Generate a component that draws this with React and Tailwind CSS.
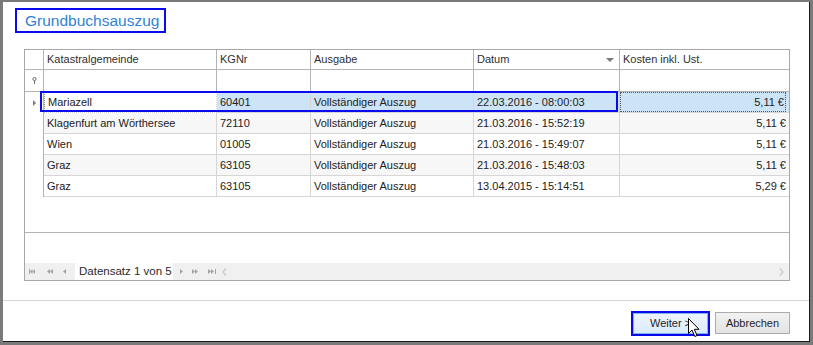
import React from "react";

const rows = [
  ["Mariazell", "60401", "Vollständiger Auszug", "22.03.2016 - 08:00:03", "5,11 €"],
  ["Klagenfurt am Wörthersee", "72110", "Vollständiger Auszug", "21.03.2016 - 15:52:19", "5,11 €"],
  ["Wien", "01005", "Vollständiger Auszug", "21.03.2016 - 15:49:07", "5,11 €"],
  ["Graz", "63105", "Vollständiger Auszug", "21.03.2016 - 15:48:03", "5,11 €"],
  ["Graz", "63105", "Vollständiger Auszug", "13.04.2015 - 15:14:51", "5,29 €"],
];

const Tri = ({ dir = "left", className = "" }) => (
  <svg width="3" height="5" viewBox="0 0 3 5" className={className}>
    {dir === "left" ? (
      <polygon points="3,0 0,2.5 3,5" fill="#a3a3a3" />
    ) : (
      <polygon points="0,0 3,2.5 0,5" fill="#a3a3a3" />
    )}
  </svg>
);

function Navigator() {
  return (
    <div className="flex items-center h-[17px] bg-[#f0f0f0]">
      <svg width="6" height="5" viewBox="0 0 6 5" className="ml-[4px]">
        <rect x="0" y="0" width="1" height="5" fill="#a3a3a3" />
        <polygon points="3.5,0 1,2.5 3.5,5" fill="#a3a3a3" />
        <polygon points="6,0 3.5,2.5 6,5" fill="#a3a3a3" />
      </svg>
      <svg width="6" height="5" viewBox="0 0 6 5" className="ml-[12px]">
        <polygon points="3,0 0,2.5 3,5" fill="#a3a3a3" />
        <polygon points="6,0 3,2.5 6,5" fill="#a3a3a3" />
      </svg>
      <Tri dir="left" className="ml-[10px]" />
      <div className="ml-[9px] w-[98px] h-[17px] bg-white flex items-center pl-[4px] text-[11.5px] text-[#2b2b2b] leading-none">
        Datensatz 1 von 5
      </div>
      <Tri dir="right" className="ml-[7px]" />
      <svg width="6" height="5" viewBox="0 0 6 5" className="ml-[9px]">
        <polygon points="0,0 3,2.5 0,5" fill="#a3a3a3" />
        <polygon points="3,0 6,2.5 3,5" fill="#a3a3a3" />
      </svg>
      <svg width="8" height="5" viewBox="0 0 8 5" className="ml-[10px]">
        <polygon points="0,0 3,2.5 0,5" fill="#a3a3a3" />
        <polygon points="3,0 6,2.5 3,5" fill="#a3a3a3" />
        <rect x="7" y="0" width="1" height="5" fill="#a3a3a3" />
      </svg>
      <svg width="5" height="8" viewBox="0 0 5 8" className="ml-[6px]">
        <polyline points="4,0.5 1,4 4,7.5" fill="none" stroke="#c9c9c9" strokeWidth="1.3" />
      </svg>
      <div className="flex-1" />
      <svg width="5" height="8" viewBox="0 0 5 8" className="mr-[5px]">
        <polyline points="1,0.5 4,4 1,7.5" fill="none" stroke="#c9c9c9" strokeWidth="1.3" />
      </svg>
    </div>
  );
}

function Grid() {
  const cols = "grid grid-cols-[19px_173px_94px_163px_146px_169px]";
  const hcell = "h-[20px] border-b border-r border-[#b4b4b4] flex items-center px-[3px] text-[#303030]";
  const fcell = "h-[22px] border-b border-r border-[#b4b4b4]";
  return (
    <div className="relative ml-[21px] mt-[16px] w-[766px] h-[232px] border border-[#a8a8a8] text-[11px] leading-none" style={{ fontFamily: '"Liberation Sans", Arial, sans-serif' }}>
      {/* header */}
      <div className={cols}>
        <div className={hcell} />
        <div className={hcell}>Katastralgemeinde</div>
        <div className={hcell}>KGNr</div>
        <div className={hcell}>Ausgabe</div>
        <div className={hcell + " justify-between"}>
          <span>Datum</span>
          <svg width="8" height="4" viewBox="0 0 8 4" className="mr-[2px]">
            <polygon points="0,0 8,0 4,4" fill="#7a7a7a" />
          </svg>
        </div>
        <div className={hcell.replace("border-r ", "")}>Kosten inkl. Ust.</div>
      </div>
      {/* filter row */}
      <div className={cols}>
        <div className={fcell + " flex items-center justify-center"}>
          <svg width="5" height="7" viewBox="0 0 5 7">
            <circle cx="2.5" cy="2" r="1.6" fill="none" stroke="#6a6a6a" strokeWidth="1" />
            <line x1="2.5" y1="3.6" x2="2.5" y2="7" stroke="#6a6a6a" strokeWidth="1" />
          </svg>
        </div>
        <div className={fcell} />
        <div className={fcell} />
        <div className={fcell} />
        <div className={fcell} />
        <div className={fcell.replace("border-r ", "")} />
      </div>
      {/* data rows */}
      {rows.map((r, i) => {
        const sel = i === 0;
        const alt = i % 2 === 1;
        const bg = sel ? "bg-[#cde4f7]" : alt ? "bg-[#f7f7f7]" : "bg-white";
        const cell = `h-[21px] border-b border-r border-[#d6d6d6] flex items-center px-[3px] text-[#222] whitespace-nowrap overflow-hidden ${bg}`;
        return (
          <div key={i} className={cols}>
            <div className="h-[21px] border-r border-[#b4b4b4] bg-white flex items-center justify-center">
              {sel && (
                <svg width="3" height="6" viewBox="0 0 3 6" className="ml-[1px]">
                  <polygon points="0,0 3,3 0,6" fill="#7a7a7a" />
                </svg>
              )}
            </div>
            <div className={sel ? "h-[21px] border-b border-r border-[#d6d6d6] flex items-center px-[3px] text-[#222] bg-white border-l border-l-[#888] border-dotted" : cell}>
              {r[0]}
            </div>
            <div className={cell}>{r[1]}</div>
            <div className={cell}>{r[2]}</div>
            <div className={cell}>{r[3]}</div>
            <div className={`h-[21px] border-b border-[#d6d6d6] flex items-center justify-end pr-[3px] text-[#222] ${bg}`}>
              {sel ? (
                <div className="w-full h-full border border-dotted border-[#555] flex items-center justify-end pr-[1px]">{r[4]}</div>
              ) : (
                r[4]
              )}
            </div>
          </div>
        );
      })}
      {/* empty area */}
      <div className="h-[36px] border-b border-[#b4b4b4]" />
      <div className="h-[30px]" />
      <Navigator />
      {/* highlight overlay */}
      <div className="absolute left-[15px] top-[41px] w-[578px] h-[21px] border-2 border-[#0a0aef] pointer-events-none" />
    </div>
  );
}

export default function App() {
  return (
    <div className="w-[813px] h-[345px] bg-[#7a7a7a] pl-[3px] pt-[2px] pr-[3px] pb-[3px]" style={{ fontFamily: '"Liberation Sans", Arial, sans-serif' }}>
      <div className="w-full h-full bg-white border-r border-b border-[#1a1a1a] flex flex-col">
        <div className="ml-[12px] mt-[6px] w-[151px] h-[25px] border-2 border-[#0a0aef] flex items-center pl-[8px]">
          <span className="text-[15.5px] text-[#2f82d4] leading-none">Grundbuchsauszug</span>
        </div>
        <Grid />
        <div className="mt-[19px] h-px bg-[#d6d6d6]" />
        <div className="mt-[10px] flex justify-end items-start pr-[19px] text-[11px] text-[#1e1e1e]">
          <div className="relative w-[79px] h-[25px] border-2 border-[#0a0aef]">
            <div className="w-full h-full border border-[#7eb4ea] bg-gradient-to-b from-[#ecf4fc] to-[#dcecfc] flex items-center justify-center">
              Weiter &gt;
            </div>
            <svg width="13" height="21" viewBox="0 0 13 21" className="absolute left-[55px] top-[5px]">
              <path d="M0.5 0.5 L0.5 15.5 L4 12 L6.8 18.5 L9 17.5 L6.3 11.3 L11 11.3 Z" fill="#fff" stroke="#000" strokeWidth="1" strokeLinejoin="miter" />
            </svg>
          </div>
          <div className="ml-[5px] mt-[1px] w-[75px] h-[22px] border border-[#acacac] bg-gradient-to-b from-[#f2f2f2] to-[#e3e3e3] flex items-center justify-center">
            Abbrechen
          </div>
        </div>
      </div>
    </div>
  );
}
